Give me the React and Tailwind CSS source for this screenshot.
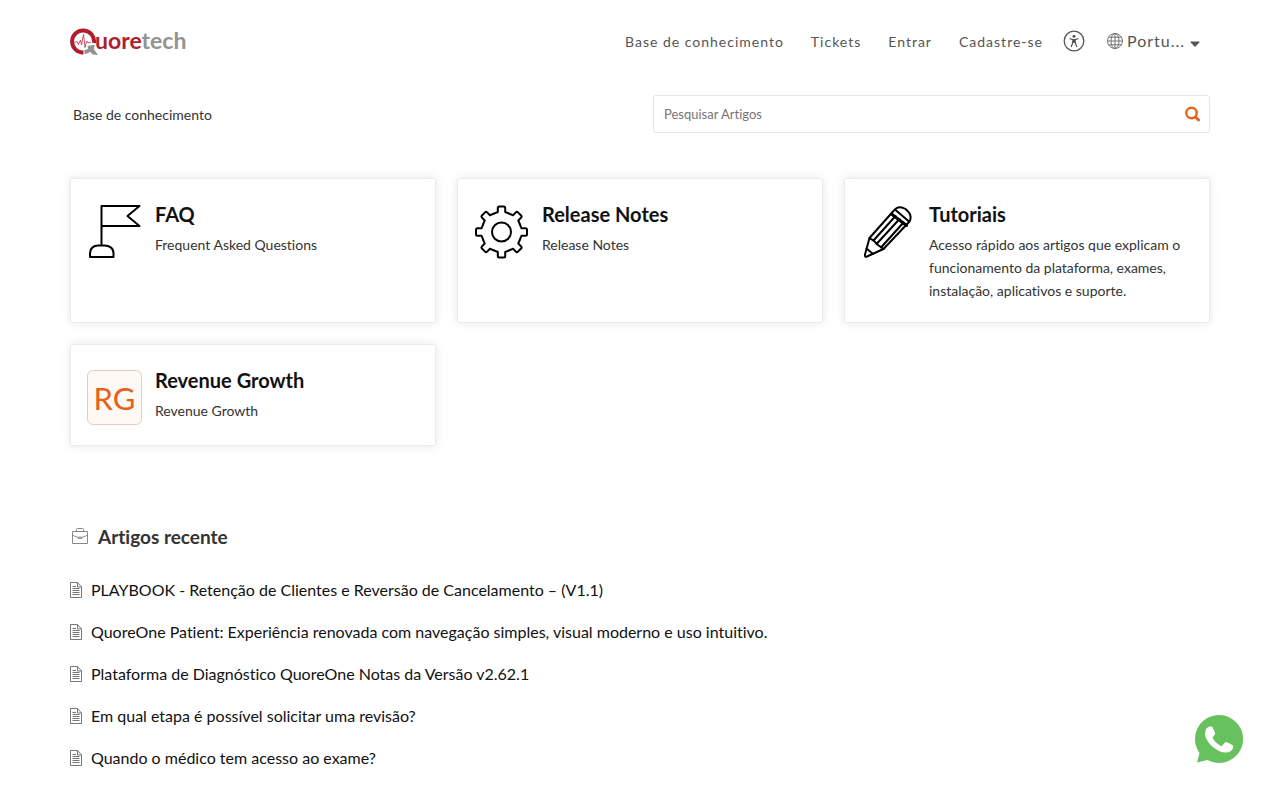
import React from "react";

const articles = [
  "PLAYBOOK - Retenção de Clientes e Reversão de Cancelamento – (V1.1)",
  "QuoreOne Patient: Experiência renovada com navegação simples, visual moderno e uso intuitivo.",
  "Plataforma de Diagnóstico QuoreOne Notas da Versão v2.62.1",
  "Em qual etapa é possível solicitar uma revisão?",
  "Quando o médico tem acesso ao exame?",
];

function Logo() {
  return (
    <svg width="122" height="38" viewBox="0 -6 122 38" role="img" aria-label="Quoretech">
      <path d="M13.5 24.5 A11 11 0 1 1 24 15" fill="none" stroke="#b01e2e" strokeWidth="4" />
      <path d="M14.5 24.3 A11 11 0 0 0 20.5 21" fill="none" stroke="#939393" strokeWidth="4" />
      <path d="M17.5 18 L25 16.800 L23.800 21 L28 27 L22.500 26.500 L18.500 22 Z" fill="#939393" />
      <path d="M4.500 14.500 L7 13.500 L8.500 16.500 L10.500 12 L11.500 17 L13.500 6.500 L15 19.500 L16.500 13 L18 15 L21 14" fill="none" stroke="#c0404c" strokeWidth="0.9" />
      <text x="25" y="21" fontFamily="Lato, sans-serif" fontWeight="700" fontSize="23" fill="#b01e2e">
        uore<tspan fill="#939393">tech</tspan>
      </text>
    </svg>
  );
}

function AccessibilityIcon() {
  return (
    <svg width="22" height="22" viewBox="0 0 22 22" fill="none" stroke="#555" aria-hidden="true">
      <circle cx="11" cy="11" r="9.800" strokeWidth="1.300" />
      <circle cx="11" cy="6.300" r="1.500" fill="#555" stroke="none" />
      <path d="M6.500 8.500 L9.800 9.600 H12.200 L15.500 8.500 M9.800 9.600 V12.500 L8.200 17 M12.200 9.600 V12.500 L13.800 17 M9.800 12.500 H12.200" strokeWidth="1.200" />
      <path d="M9.700 9.500 H12.300 V12.800 H9.700 Z" fill="#555" stroke="none" />
    </svg>
  );
}

function GlobeIcon() {
  return (
    <svg width="16" height="16" viewBox="0 0 16 16" fill="none" stroke="#666" strokeWidth="0.900" aria-hidden="true">
      <circle cx="8" cy="8" r="7.500" />
      <ellipse cx="8" cy="8" rx="4" ry="7.500" />
      <path d="M8 0.500 V15.500 M0.500 8 H15.500 M1.600 4.200 H14.400 M1.600 11.800 H14.400" />
    </svg>
  );
}

function SearchIcon() {
  return (
    <svg width="15" height="16" viewBox="0 0 15 16" fill="none" stroke="currentColor" aria-hidden="true">
      <circle cx="6.500" cy="7" r="5.200" strokeWidth="2.400" />
      <path d="M10.500 11 L13.600 14.100" strokeWidth="2.800" strokeLinecap="round" />
    </svg>
  );
}

function FlagIcon() {
  return (
    <svg width="55" height="55" viewBox="0 0 55 55" fill="none" stroke="#000" strokeWidth="2" strokeLinejoin="round" aria-hidden="true">
      <path d="M14.500 41 V2 H52.500 L40.500 12 L52.500 22 H14.500" />
      <path d="M3 53 V49 C3 44 7 41.500 11 41.500 H17.500 C22 41.500 26.500 44 26.500 49 V53 Z" />
    </svg>
  );
}

const gearTooth = "M-7.600 -18.400 L-3.700 -20 V-24 Q-3.700 -25.500 -2.200 -25.500 H2.200 Q3.700 -25.500 3.700 -24 V-20 L7.600 -18.400";

function GearIcon() {
  return (
    <svg width="55" height="55" viewBox="0 0 55 55" fill="none" stroke="#000" strokeWidth="2" strokeLinejoin="round" strokeLinecap="round" aria-hidden="true">
      <g transform="translate(27.500 28)">
        <circle r="9.500" />
        {[0, 45, 90, 135, 180, 225, 270, 315].map((angle) => (
          <path key={angle} d={gearTooth} transform={`rotate(${angle})`} />
        ))}
      </g>
    </svg>
  );
}

function PencilIcon() {
  return (
    <svg width="55" height="55" viewBox="0 0 55 55" fill="none" stroke="#000" strokeWidth="2" strokeLinejoin="round" strokeLinecap="round" aria-hidden="true">
      <path d="M8.500 34 L32 7.500 Q37 0.500 44.500 5 Q52 11 48.500 17.500 L22.500 45 L6 52.500 Q3.500 53.500 4 50.500 Z" />
      <path d="M8.500 34 L13 37 L17 41 L22.500 45 M12.500 36.500 L34.500 12 M15.500 40 L38.500 15 M20 43.500 L42.500 18.500 M5.500 44.500 L12 50" />
      <path d="M30.500 10 L45.500 21.500" strokeWidth="3" />
      <path d="M34.500 6 L48 17.500" />
    </svg>
  );
}

function InitialsIcon() {
  return (
    <span className="flex h-[55px] w-[55px] items-center justify-center rounded-md border border-[#eccbbb] bg-[#fff9f6] pt-0.5 text-[31px] leading-none text-[#e9601a]">
      RG
    </span>
  );
}

function BriefcaseIcon() {
  return (
    <svg width="18" height="18" viewBox="0 0 18 18" fill="none" stroke="#888" strokeWidth="1" aria-hidden="true">
      <path d="M1.500 3.500 H16.500 V15.500 H1.500 Z M5.500 3.500 V1.500 Q5.500 0.500 6.500 0.500 H11.500 Q12.500 0.500 12.500 1.500 V3.500 M1.500 7 Q4 9 7.500 9.500 M16.500 7 Q14 9 10.500 9.500 M7.500 9 H10.500 V10.500 H7.500 Z" />
    </svg>
  );
}

function DocumentIcon() {
  return (
    <svg width="12" height="16" viewBox="0 0 12 16" fill="none" stroke="#777" strokeWidth="1" aria-hidden="true">
      <path d="M0.500 0.500 H7.500 L11.500 5 V15.500 H0.500 Z M7.500 0.500 V5 H11.500 M2.500 4.500 H6 M2.500 6.500 H9.500 M2.500 8.500 H9.500 M2.500 10.500 H9.500 M2.500 12.500 H9.500" />
    </svg>
  );
}

const categories = [
  { title: "FAQ", text: "Frequent Asked Questions", icon: <FlagIcon /> },
  { title: "Release Notes", text: "Release Notes", icon: <GearIcon /> },
  {
    title: "Tutoriais",
    text: "Acesso rápido aos artigos que explicam o funcionamento da plataforma, exames, instalação, aplicativos e suporte.",
    icon: <PencilIcon />,
  },
  { title: "Revenue Growth", text: "Revenue Growth", icon: <InitialsIcon /> },
];

export default function App() {
  return (
    <div className="min-h-screen bg-white font-['Lato',sans-serif] text-[#333] [font-variant-ligatures:none]">
      <div className="mx-auto max-w-[1170px] px-[15px]">
        <header className="flex items-center justify-between pt-[22px]">
          <a href="#inicio">
            <Logo />
          </a>
          <div className="flex items-center pr-2.5 tracking-[1px] text-[#555]">
            <nav className="flex items-center gap-[27px] pt-0.5 text-sm">
              <a href="#base">Base de conhecimento</a>
              <a href="#tickets">Tickets</a>
              <a href="#entrar">Entrar</a>
              <a href="#cadastro">Cadastre-se</a>
            </nav>
            <button type="button" aria-label="Acessibilidade" className="ml-5">
              <AccessibilityIcon />
            </button>
            <div className="ml-[22px] flex items-center gap-1">
              <GlobeIcon />
              <select aria-label="Idioma" className="appearance-none bg-transparent text-base tracking-[1px]">
                <option>Portu...</option>
              </select>
              <svg className="mt-1.5" width="10" height="6" viewBox="0 0 10 6" aria-hidden="true">
                <path d="M1 0.500 H9 Q10 0.500 9.300 1.500 L5.800 5.300 Q5 6 4.200 5.300 L0.700 1.500 Q0 0.500 1 0.500 Z" fill="#555" />
              </svg>
            </div>
          </div>
        </header>

        <main>
          <div className="mt-[35px] flex items-center justify-between">
            <a href="#base" className="pl-[3px] pt-0.5 text-sm">
              Base de conhecimento
            </a>
            <form role="search" className="flex h-[38px] w-[557px] items-center rounded-[3px] border border-[#e5e5e5] pl-2.5 pr-[9px]">
              <input
                type="search"
                aria-label="Pesquisar Artigos"
                placeholder="Pesquisar Artigos"
                className="min-w-0 flex-1 pt-0.5 text-[13px] outline-none placeholder:text-[#757575]"
              />
              <button type="button" aria-label="Pesquisar" className="text-[#e9601a]">
                <SearchIcon />
              </button>
            </form>
          </div>

          <section aria-label="Categorias" className="mt-[45px] grid grid-cols-3 gap-[21px]">
            {categories.map((c) => (
              <a
                key={c.title}
                href="#categoria"
                className="flex gap-[13px] rounded-[2px] border border-[#ebebeb] px-4 pb-5 pt-6 shadow-[0_0_10px_rgba(0,0,0,0.1)]"
              >
                <span className="mt-px shrink-0">{c.icon}</span>
                <span className="block">
                  <span className="block text-xl leading-[22px] font-bold text-[#111]">{c.title}</span>
                  <span className="mt-2 block text-sm leading-[23px]">{c.text}</span>
                </span>
              </a>
            ))}
          </section>

          <section className="mt-[77px]">
            <h2 className="flex items-center gap-[9px] text-[19px] leading-7 font-bold">
              <span className="ml-px">
                <BriefcaseIcon />
              </span>
              Artigos recente
            </h2>
            <ul className="mt-[26px] flex flex-col gap-4 text-base leading-[26px] text-[#111]">
              {articles.map((a) => (
                <li key={a}>
                  <a href="#artigo" className="flex items-center gap-[9px]">
                    <DocumentIcon />
                    {a}
                  </a>
                </li>
              ))}
            </ul>
          </section>
        </main>
      </div>

      <a href="#whatsapp" aria-label="WhatsApp" className="fixed right-[37px] bottom-[37px]">
        <svg width="48" height="48" viewBox="0 0 48 48" aria-hidden="true">
          <path d="M24 0 A24 24 0 1 1 12.500 45 L2 47.500 L4.500 38 A24 24 0 0 1 24 0 Z" fill="#67c15e" />
          <path d="M11 14 Q14 10.500 16.500 11.500 Q18 12 20 18 Q20.500 19.500 17.500 22.500 Q20 28 26 31 L27 31 Q30 27 31 27 Q36 28.500 38 30.500 Q39 33 36 36 Q31 39 24 36 Q14 31 10.500 22 Q9.500 17 11 14 Z" fill="#fff" />
        </svg>
      </a>
    </div>
  );
}
